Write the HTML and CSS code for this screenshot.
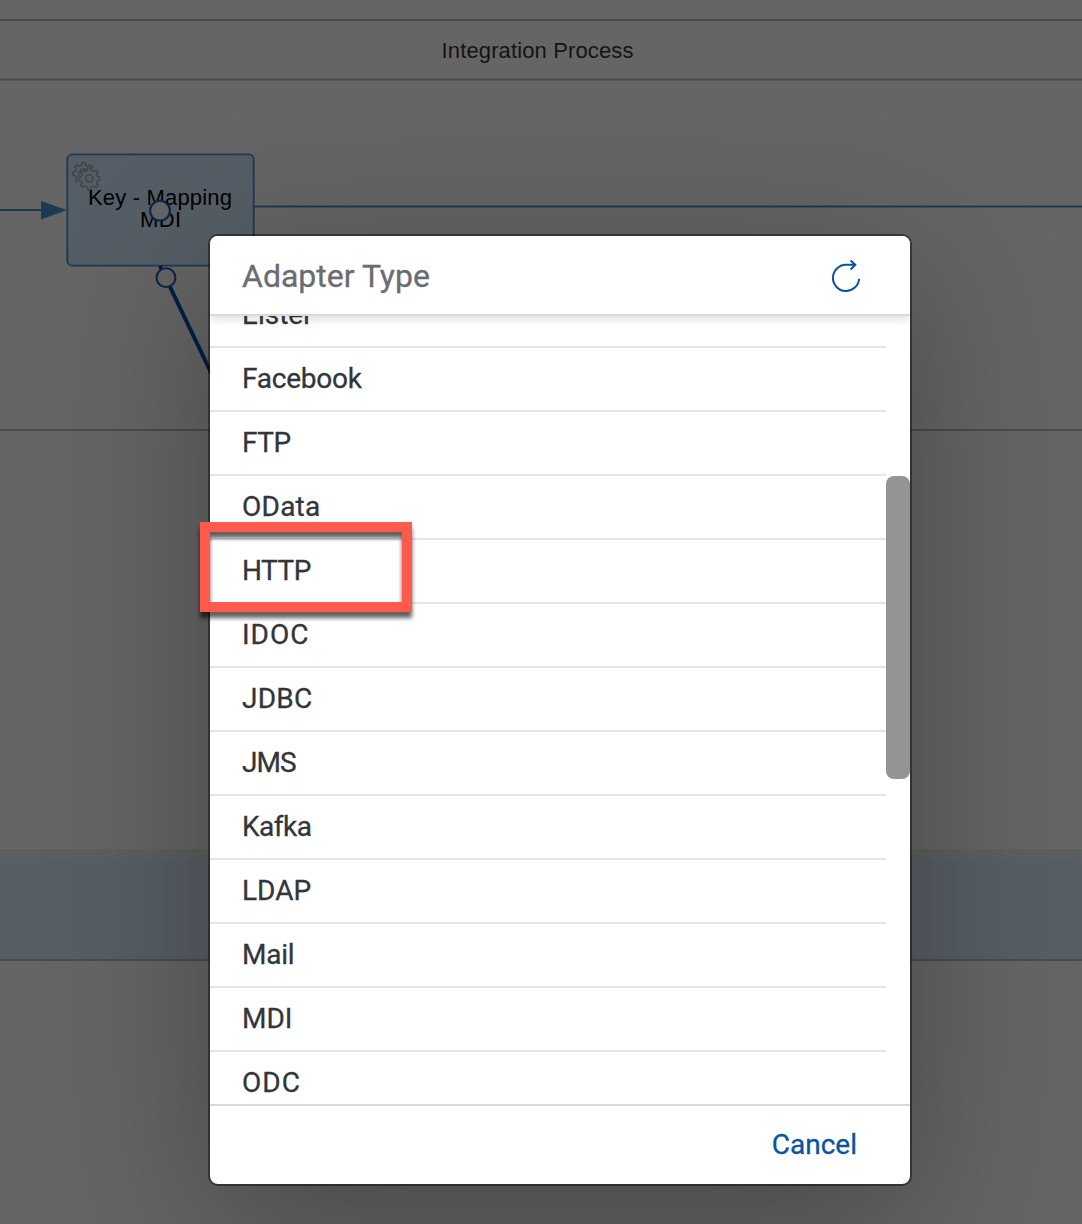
FILE: index.html
```html
<!DOCTYPE html>
<html lang="en">
<head>
<meta charset="utf-8">
<title>Adapter Type</title>
<link rel="stylesheet" href="styles.css">
</head>
<body>
<main class="stage">
  <svg class="canvas" viewBox="0 0 1082 1224" width="1082" height="1224">
    <!-- pool frames -->
    <path class="frame" d="M0 20H1082M0 79.5H1082M0 430H1082"/>
    <rect class="lane-edge" x="0" y="849" width="1082" height="9"/>
    <rect class="lane" x="0" y="858" width="1082" height="101"/>
    <path class="frame" d="M0 960H1082"/>
    <text class="pool-title" x="441.5" y="58" textLength="192">Integration Process</text>
    <!-- step -->
    <rect class="step" x="67.3" y="154.3" width="186.4" height="111.4" rx="5"/>
    <path class="flow" d="M0 210H44M254 206.5H1082"/>
    <path class="arrow" d="M41 201L67 210L41 219.5Z"/>
    <g class="gears">
      <path d="M77.500 182l-2-2 1-2.600-1-1.800-2.700-.7v-3l2.700-.7.9-2-1.500-2.400 2.100-2.100 2.400 1.500 2-.9.700-2.700h3l.7 2.700 2 .9 2.400-1.500 2.100 2.100-1 2"/>
      <path d="M79 176a5 5 0 0 1 7.500-6"/>
      <path d="M87.800 168h3l.7 2.700 2 .9 2.400-1.500 2.100 2.100-1.500 2.400.9 2 2.700.7v3l-2.700.7-.9 2 1.500 2.400-2.100 2.100-2.400-1.500-2 .9-.7 2.700h-3l-.7-2.700-2-.9-2.400 1.500-2.100-2.100 1.500-2.400-.9-2-2.700-.7v-3l2.700-.7.9-2-1.500-2.400 2.100-2.100 2.400 1.500 2-.9z"/>
      <circle cx="89.300" cy="178.500" r="3.600"/>
    </g>
    <text class="step-name" x="88" y="205" textLength="144">Key - Mapping</text>
    <text class="step-name" x="140" y="227" textLength="41">MDI</text>
    <!-- connector being drawn -->
    <path class="link" d="M160 266L216 383"/>
    <circle class="port" cx="160" cy="210.700" r="9.900"/>
    <circle class="port" cx="166" cy="277.700" r="9.400"/>
  </svg>

  <section class="dialog" role="dialog" aria-labelledby="title">
    <header class="dialog-header">
      <h1 class="dialog-title" id="title">Adapter Type</h1>
      <button class="refresh" aria-label="Refresh">
        <svg viewBox="0 0 32 36" width="32" height="36">
          <path d="M29.100 20.700A13.100 13.100 0 1 1 15.800 6.800H25.300M20.600 2.500L25.300 6.800L20.600 11.500"/>
        </svg>
      </button>
    </header>
    <div class="dialog-body">
      <ul class="adapters">
        <li class="adapter">Elster</li>
        <li class="adapter snug">Facebook</li>
        <li class="adapter tight">FTP</li>
        <li class="adapter loose">OData</li>
        <li class="adapter tight">HTTP</li>
        <li class="adapter wide">IDOC</li>
        <li class="adapter loose">JDBC</li>
        <li class="adapter tighter">JMS</li>
        <li class="adapter tight">Kafka</li>
        <li class="adapter">LDAP</li>
        <li class="adapter snug">Mail</li>
        <li class="adapter">MDI</li>
        <li class="adapter wide">ODC</li>
      </ul>
      <div class="scrollbar"><div class="thumb"></div></div>
    </div>
    <footer class="dialog-footer">
      <button class="cancel">Cancel</button>
    </footer>
  </section>
  <div class="highlight"></div>
</main>
</body>
</html>
```
FILE: styles.css
```css
* { box-sizing: border-box; }

body {
  margin: 0;
  background: #656565;
  font-family: Roboto, "Noto Sans", sans-serif;
}

.stage {
  position: relative;
  width: 1082px;
  height: 1224px;
  padding: 236px 172px 40px 210px;
  overflow: hidden;
}

/* dimmed diagram behind the dialog */
.canvas { position: absolute; inset: 0; }
.frame { stroke: #4b4b4b; stroke-width: 2; }
.lane-edge { fill: #5e605e; }
.lane { fill: #575e65; }
.pool-title, .step-name {
  font: 22px "Liberation Sans", Arial, sans-serif;
}
.pool-title { fill: #141414; }
.step-name { fill: #000; }
.step { fill: #555e66; stroke: #1d3a55; stroke-width: 1.8; }
.flow { stroke: #1d3a55; stroke-width: 1.8; }
.arrow { fill: #1d3a55; }
.gears path, .gears circle { fill: none; stroke: #42474c; stroke-width: 1.7; }
.link { stroke: #031f42; stroke-width: 4; }
.port { fill: #656565; stroke: #0b2547; stroke-width: 2; }

.dialog {
  position: relative;
  display: flex;
  flex-direction: column;
  width: 700px;
  height: 948px;
  background: #fff;
  border-radius: 8px;
  box-shadow: 0 0 0 2px rgba(0, 0, 0, .42), 0 40px 160px rgba(0, 0, 0, .3);
}

.dialog-header {
  position: relative;
  z-index: 1;
  display: flex;
  align-items: center;
  justify-content: space-between;
  height: 80px;
  padding: 2px 48px 0 32px;
  background: #fff;
  border-bottom: 2px solid #d9d9d9;
  border-radius: 8px 8px 0 0;
  box-shadow: 0 4px 8px rgba(0, 0, 0, .12);
  clip-path: inset(0 0 -16px 0);
}

.dialog-title {
  margin: 0;
  color: #6a6d70;
  font-size: 32px;
  font-weight: 400;
  -webkit-text-stroke: .3px;
}

button {
  padding: 0;
  border: 0;
  background: none;
  font: inherit;
}

.refresh svg { display: block; }
.refresh path { fill: none; stroke: #0854a0; stroke-width: 2; }

.dialog-body {
  display: flex;
  height: 788px;
  overflow: hidden;
}

.adapters {
  flex: 1;
  margin: -32px 0 0;
  padding: 0;
  list-style: none;
}

.adapter {
  display: flex;
  align-items: center;
  height: 64px;
  padding: 0 0 2px 32px;
  border-bottom: 2px solid #e5e5e5;
  color: #32363a;
  font-size: 28px;
  -webkit-text-stroke: .3px;
}

/* per-word tracking */
.tighter { letter-spacing: -.9px; }
.tight { letter-spacing: -.5px; }
.snug { letter-spacing: -.25px; }
.loose { letter-spacing: .25px; }
.wide { letter-spacing: 1px; }

.scrollbar { width: 24px; padding-top: 160px; }
.thumb { height: 303px; border-radius: 8px; background: #949494; }

.dialog-footer {
  display: flex;
  align-items: center;
  justify-content: flex-end;
  height: 80px;
  padding: 0 53px 2px 0;
  border-top: 2px solid #d9d9d9;
}

.cancel {
  color: #0854a0;
  font-size: 28px;
  -webkit-text-stroke: .3px;
}

/* callout drawn over the HTTP entry */
.highlight {
  position: absolute;
  left: 200px;
  top: 522px;
  width: 212px;
  height: 90px;
  border: 10px solid #ff5a4b;
  filter: drop-shadow(0 6px 2px rgba(0, 0, 0, .62));
}
```
